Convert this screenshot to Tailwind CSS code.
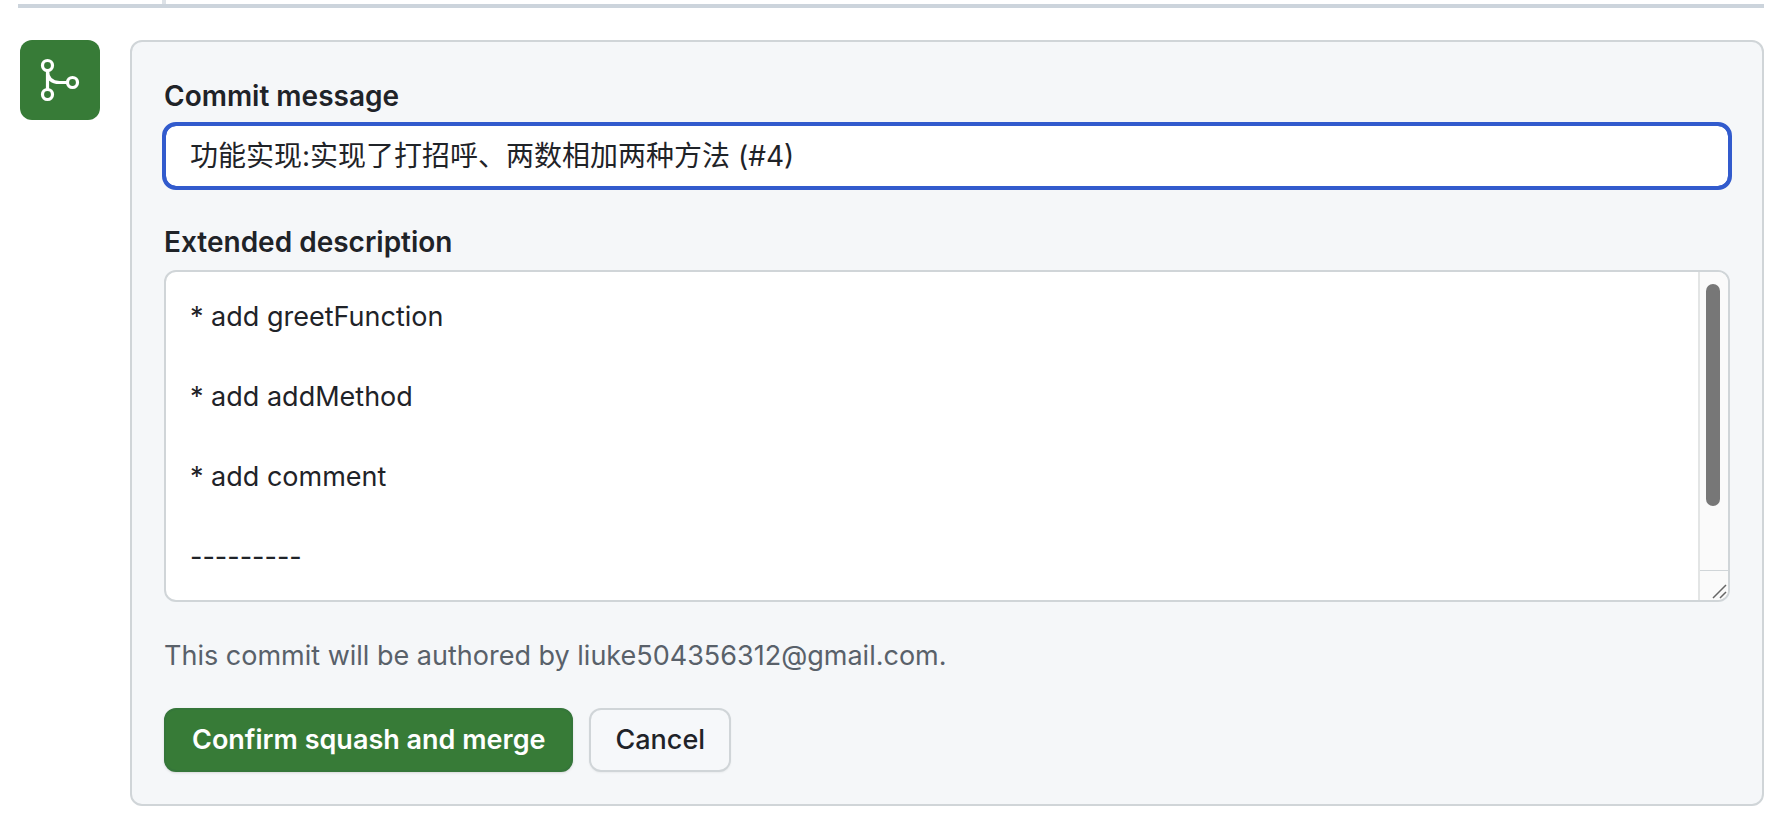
<!DOCTYPE html>
<html lang="en">
<head>
  <meta charset="UTF-8" />
  <meta name="viewport" content="width=device-width, initial-scale=1.0"/>
  <title>Squash and merge</title>
  <script src="https://cdn.jsdelivr.net/npm/@tailwindcss/browser@4"></script>
</head>
<body class="bg-white text-[#1f2328] font-[Inter,'Noto_Sans_CJK_SC',sans-serif] text-[28px] leading-10">

  <!-- End of the timeline -->
  <div class="ml-[18px] mr-4">
    <div class="ml-36 w-1 h-1 bg-[#dde2e7]"></div>
    <div class="h-1 bg-[#ccd4dc]"></div>
  </div>

  <!-- Merge box -->
  <main class="flex items-start gap-[30px] pl-5 pr-4 pt-8">
    <div class="shrink-0 w-20 h-20 rounded-xl bg-[#377b37] text-white flex items-center justify-center">
      <svg class="w-12 h-12" viewBox="0 0 48 48" fill="none" stroke="currentColor" stroke-width="3.2" aria-hidden="true">
        <circle cx="11.5" cy="9.5" r="5"/>
        <circle cx="11.5" cy="38.5" r="5"/>
        <circle cx="36.5" cy="26.5" r="5"/>
        <path d="M11.5 14.5v19M11.5 14.5c0 8 4.5 12 12 12h8"/>
      </svg>
    </div>

    <form class="flex-1 min-w-0 px-8 pt-[34px] pb-8 bg-[#f5f7f9] border-2 border-[#d0d5d8] rounded-xl">
      <label for="commit-title" class="block mb-2 font-semibold">Commit message</label>
      <input id="commit-title" type="text" value="功能实现:实现了打招呼、两数相加两种方法 (#4)" class="block w-full h-16 px-6 pb-1 bg-white border-2 border-[#325bcd] rounded-xl outline-4 -outline-offset-2 outline-[#325bcd]" />

      <label for="commit-description" class="block mt-[34px] mb-2 font-semibold">Extended description</label>
      <div class="flex bg-white border-2 border-[#d0d5d8] rounded-xl overflow-hidden">
        <textarea id="commit-description" class="block flex-1 min-w-0 h-[328px] px-6 pt-[25px] resize-none outline-none overflow-hidden text-[27px] leading-10">* add greetFunction

* add addMethod

* add comment

---------</textarea>
        <!-- Scrollbar and resize corner -->
        <div class="w-[30px] flex flex-col bg-[#fafafa] border-l-2 border-[#e3e5e5]" aria-hidden="true">
          <div class="flex-1 pt-3 pl-1.5">
            <div class="w-3.5 h-[222px] rounded-full bg-[#777777]"></div>
          </div>
          <div class="h-[30px] border-t border-[#d0d5d8] flex items-end justify-end">
            <svg class="w-4 h-4" viewBox="0 0 16 16" fill="none" stroke="#666666" stroke-width="1.5">
              <path d="M1 14L14 1M8 14L14 8"/>
            </svg>
          </div>
        </div>
      </div>

      <p class="mt-[34px] mb-8 text-[27px] leading-10 text-[#59616a]">This commit will be authored by liuke504356312@gmail.com.</p>

      <div class="flex gap-4 text-[27px] leading-10">
        <button type="submit" class="h-16 px-[26px] bg-[#377b37] text-white font-semibold border-2 border-[#35763a] rounded-xl shadow-sm">Confirm squash and merge</button>
        <button type="button" class="h-16 px-6 bg-[#f6f8fa] font-medium border-2 border-[#d0d5d8] rounded-xl shadow-xs">Cancel</button>
      </div>
    </form>
  </main>

</body>
</html>
